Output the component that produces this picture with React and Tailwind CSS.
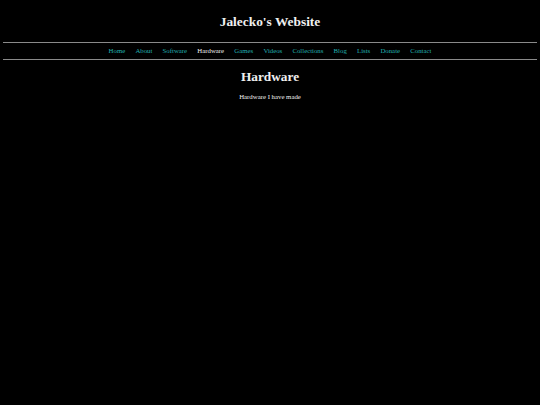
const links = ['Home', 'About', 'Software', 'Hardware', 'Games', 'Videos', 'Collections', 'Blog', 'Lists', 'Donate', 'Contact'];

export default function App() {
  return (
    <div className="h-[405px] bg-black text-[#f0f0f0] overflow-hidden" style={{ fontFamily: '"Liberation Serif", "Times New Roman", serif' }}>
      <h1 className="pt-[14px] text-center text-[13.4px] leading-[16px] font-bold">Jalecko's Website</h1>
      <div className="mx-[3px] mt-[12px] border-t border-[#8a8a8a]" />
      <nav className="flex h-[16px] items-center justify-center gap-[10.2px] text-[6.8px] leading-[8px]">
        {links.map((l) => (
          <a key={l} className={l === 'Hardware' ? 'text-[#f0f0f0]' : 'text-[#22b0b0]'}>{l}</a>
        ))}
      </nav>
      <div className="mx-[3px] border-t border-[#8a8a8a]" />
      <h2 className="mt-[9px] text-center text-[13.3px] leading-[16px] font-bold">Hardware</h2>
      <p className="mt-[8px] text-center text-[6.8px] leading-[8px]">Hardware I have made</p>
    </div>
  );
}
